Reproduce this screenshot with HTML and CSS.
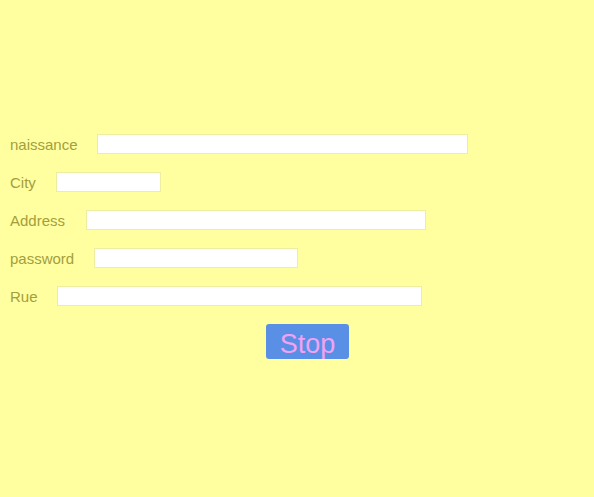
FILE: index.html
```html
<!DOCTYPE html>
<html>
<head>
<meta charset="utf-8">
<link rel="stylesheet" href="styles.css">
</head>
<body>
<form class="form">
  <div class="row"><label class="lbl">naissance</label><input class="field w-naissance" type="text"></div>
  <div class="row"><label class="lbl">City</label><input class="field w-city" type="text"></div>
  <div class="row"><label class="lbl">Address</label><input class="field w-address" type="text"></div>
  <div class="row"><label class="lbl">password</label><input class="field w-password" type="password"></div>
  <div class="row"><label class="lbl">Rue</label><input class="field w-rue" type="text"></div>
  <div class="actions"><button type="button" class="stop">Stop</button></div>
</form>
</body>
</html>
```
FILE: styles.css
```css
html, body {
  margin: 0;
  padding: 0;
  background: #ffffa0;
  height: 100%;
}
body {
  font-family: "Liberation Sans", Arial, sans-serif;
}
.form {
  padding: 134px 0 0 10px;
  display: flex;
  flex-direction: column;
  gap: 18px;
}
.row {
  display: flex;
  align-items: center;
  gap: 20px;
  height: 20px;
}
.lbl {
  font-size: 15px;
  color: #a49e3c;
  line-height: 20px;
  padding-top: 2px;
}
.field {
  box-sizing: border-box;
  height: 20px;
  margin: 0;
  padding: 0 4px;
  border: 1px solid #eeeea2;
  background: #ffffff;
  outline: none;
}
.w-naissance { width: 371px; margin-left: -1px; }
.w-city { width: 105px; }
.w-address { width: 340px; margin-left: 1px; }
.w-password { width: 204px; }
.w-rue { width: 365px; margin-left: -1px; }
.actions {
  display: flex;
  padding-left: 256px;
}
.stop {
  box-sizing: border-box;
  width: 83px;
  height: 35px;
  padding: 6px 0 0 0;
  border: none;
  border-radius: 3px;
  background: #5a8fe6;
  color: #f2a2f2;
  font-family: "Liberation Sans", Arial, sans-serif;
  font-size: 27px;
  line-height: 29px;
}
```
